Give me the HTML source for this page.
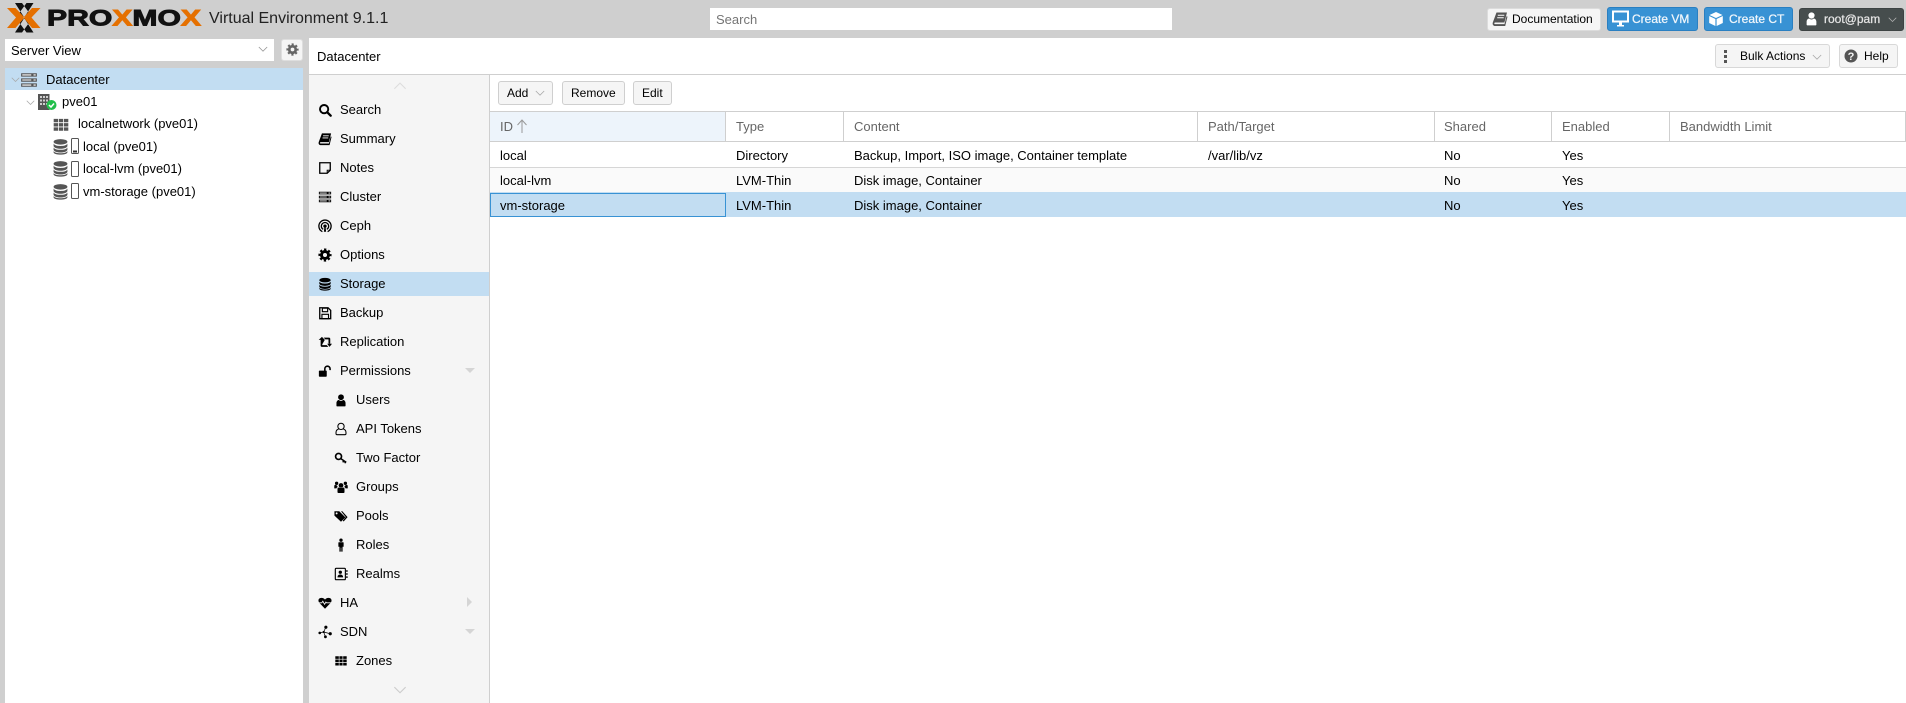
<!DOCTYPE html>
<html><head><meta charset="utf-8"><title>Proxmox VE</title>
<style>
html,body{margin:0;padding:0;width:1906px;height:703px;overflow:hidden;background:#cfcfcf}
body{position:relative;font:13px/20px "Liberation Sans",Arial,sans-serif;color:#000}
div,span.a,svg.a{position:absolute}
.t{position:absolute;white-space:nowrap;height:20px;line-height:20px;margin-top:1px}
.s{font-size:12px}
.w{font-size:12px;-webkit-text-stroke:.25px currentColor}
.b{position:absolute;box-sizing:border-box;background:#f5f5f5;border:1px solid #cfcfcf;border-radius:3px}
.h{color:#666}
svg{position:absolute;overflow:visible}
svg.m{width:14px;height:14px;margin:2px 0 0 1px}
.ln{background:#cfcfcf}
</style></head><body>
<svg width="0" height="0" style="position:absolute"><defs>
<symbol id="search" viewBox="0 0 16 16"><circle cx="7" cy="7" r="4.7" fill="none" stroke="currentColor" stroke-width="2.2"/><path d="M10.500 10.500l4 4" stroke="currentColor" stroke-width="2.600" stroke-linecap="round"/></symbol>
<symbol id="book" viewBox="0 0 16 16"><path d="M4.500 1.500H15l-2.600 10H3c-.8 0-1 1.600 0 1.600h9.500l2-8 1 .5-2.300 9.400H2.500C1 14.500.3 13.200.8 11.500z" fill="currentColor"/><path d="M5.800 4.300h6.500M5.200 6.800h6.500" stroke="#fff" stroke-width="1"/></symbol>
<symbol id="notes" viewBox="0 0 16 16"><path d="M2 2h12v8.500L10.500 14H2z" fill="none" stroke="currentColor" stroke-width="1.500"/><path d="M14 10.500h-3.500V14" fill="none" stroke="currentColor" stroke-width="1.100"/></symbol>
<symbol id="server" viewBox="0 0 16 16"><path d="M1 2h14v3H1zM1 6.500h14v3H1zM1 11h14v3H1z" fill="currentColor"/><path d="M2 3.500h8M12 3.500h2M2 8h8M12 8h2M2 12.500h8M12 12.500h2" stroke="#fff" stroke-width=".9"/></symbol>
<symbol id="ceph" viewBox="0 0 16 16"><g fill="none" stroke="currentColor" stroke-width="1.500"><path d="M5 14.500C2.500 13.300 1 10.800 1 8.200a7 7 0 0 1 14 0c0 2.600-1.500 5.100-4 6.300"/><path d="M6 11.800C4.600 11 3.800 9.700 3.800 8.200a4.200 4.200 0 0 1 8.400 0c0 1.500-.8 2.800-2.200 3.600"/></g><circle cx="8" cy="8.200" r="1.900" fill="currentColor"/><path d="M7.300 9.500h1.400l.6 5h-2.600z" fill="currentColor"/></symbol>
<symbol id="gear" viewBox="0 0 16 16"><circle cx="8" cy="8" r="4" fill="none" stroke="currentColor" stroke-width="3.400"/><circle cx="8" cy="8" r="6.300" fill="none" stroke="currentColor" stroke-width="2.400" stroke-dasharray="2.600 2.350" stroke-dashoffset="1.300"/></symbol>
<symbol id="db" viewBox="0 0 16 16"><ellipse cx="8" cy="3.600" rx="6.500" ry="2.600" fill="currentColor"/><path d="M1.500 5.300c1 1.700 3.500 2.200 6.500 2.200s5.500-.5 6.500-2.200v2.300c-.5 1.700-3.500 2.500-6.500 2.500s-6-.8-6.500-2.500zM1.500 8.900c1 1.700 3.500 2.200 6.500 2.200s5.500-.5 6.500-2.200v2.300c-.5 1.700-3.500 2.500-6.500 2.500s-6-.8-6.500-2.500z" fill="currentColor"/><path d="M1.500 12.300c1 1.500 3.500 2 6.500 2s5.500-.5 6.500-2v1.300c-.5 1.400-3.500 2-6.500 2s-6-.6-6.500-2z" fill="currentColor"/></symbol>
<symbol id="save" viewBox="0 0 16 16"><path d="M2 2h9.500L14.500 5v9.500H2z" fill="none" stroke="currentColor" stroke-width="1.500"/><path d="M5 2.500h6v4H5zM4.500 9.500h7.500v5H4.500z" fill="none" stroke="currentColor" stroke-width="1.300"/></symbol>
<symbol id="retweet" viewBox="0 0 16 16"><path d="M3.500 13V5.500H.8l3.700-3.300 3.300 3.300" fill="currentColor"/><path d="M3 5h1.800v6.500H10l1.800 2H4.500c-1 0-1.500-.5-1.500-1.500zM6.500 3h6c1 0 1.500.5 1.500 1.500V10h-2V5H8.300z" fill="currentColor"/><path d="M10.500 10h5.500l-2.800 3.500z" fill="currentColor"/></symbol>
<symbol id="unlock" viewBox="0 0 16 16"><rect x="1" y="7.500" width="9" height="7" rx=".8" fill="currentColor"/><path d="M7.800 8V5.500a3 3 0 0 1 6 0V7" fill="none" stroke="currentColor" stroke-width="1.800"/></symbol>
<symbol id="user" viewBox="0 0 16 16"><circle cx="8" cy="4.800" r="3.300" fill="currentColor"/><path d="M2.800 14.500v-3c0-2 1.300-3.500 2.800-3.500 .7.700 1.500 1 2.400 1s1.700-.3 2.400-1c1.500 0 2.800 1.500 2.800 3.500v3c0 .5-.4.800-1 .8H3.800c-.6 0-1-.3-1-.8z" fill="currentColor"/></symbol>
<symbol id="usero" viewBox="0 0 16 16"><circle cx="8" cy="5" r="3.600" fill="none" stroke="currentColor" stroke-width="1.200"/><path d="M5.400 8c-1.800.5-3.100 2-3.100 4v1.300c0 .7.500 1.200 1.200 1.200h9c.7 0 1.200-.5 1.200-1.200V12c0-2-1.300-3.500-3.100-4" fill="none" stroke="currentColor" stroke-width="1.200"/></symbol>
<symbol id="key" viewBox="0 0 16 16"><circle cx="5.200" cy="6.200" r="3.400" fill="none" stroke="currentColor" stroke-width="1.900"/><path d="M7.800 8.700l6.200 4.300M11 11l-.8 2M13 12.500l-.6 1.500" fill="none" stroke="currentColor" stroke-width="1.700"/></symbol>
<symbol id="users" viewBox="0 0 16 16"><circle cx="8" cy="6.200" r="2.700" fill="currentColor"/><circle cx="3" cy="3.800" r="1.900" fill="currentColor"/><circle cx="13" cy="3.800" r="1.900" fill="currentColor"/><path d="M4 10c0-1 .8-1.500 1.800-1.500.6.500 1.300.7 2.200.7s1.600-.2 2.200-.7c1 0 1.800.5 1.800 1.500v3.800c0 .6-.5 1-1 1H5c-.5 0-1-.4-1-1z" fill="currentColor"/><path d="M.3 6.500c.2-.8.8-1 1.400-1 .5.400 1 .6 1.700.6l.8 2c-.8.300-1.200.8-1.400 1.500H.3zM15.700 6.500c-.2-.8-.8-1-1.400-1-.5.400-1 .6-1.700.6l-.8 2c.8.300 1.200.8 1.400 1.500h2.500z" fill="currentColor"/></symbol>
<symbol id="tags" viewBox="0 0 16 16"><path d="M.5 2.500h5.500l7 7-5 5-7.500-7z" fill="currentColor"/><path d="M8 2.500h1.500l6 6.800-4.500 5-1-1 3.500-4z" fill="currentColor"/><circle cx="3" cy="5" r="1.100" fill="#f5f5f5"/></symbol>
<symbol id="male" viewBox="0 0 16 16"><circle cx="8" cy="2.500" r="1.900" fill="currentColor"/><path d="M5 5.500c0-.4.300-.7.800-.7h4.400c.5 0 .8.300.8.700V10H9.800v5.500H8.300V11h-.6v4.500H6.200V10H5z" fill="currentColor"/></symbol>
<symbol id="realm" viewBox="0 0 16 16"><rect x="1.500" y="1.500" width="11.500" height="13" rx="1" fill="none" stroke="currentColor" stroke-width="1.300"/><circle cx="7.200" cy="6" r="1.900" fill="currentColor"/><path d="M4 11.800c0-2 1.300-3.200 3.200-3.200s3.200 1.200 3.200 3.200z" fill="currentColor"/><path d="M14 3.500h1.500v2H14zM14 7h1.500v2H14zM14 10.500h1.500v2H14z" fill="currentColor"/></symbol>
<symbol id="heart" viewBox="0 0 16 16"><path d="M8 14.500L1.800 8.200C-.2 6-.1 2.500 3.800 2.200 5.800 2.100 7 3 8 4.200 9 3 10.200 2.100 12.200 2.200c3.900.3 4 3.800 2 6z" fill="currentColor"/><path d="M.5 7.800h3.800l1.200-1.800 2 3.500 1.500-2.500.8.800h6" fill="none" stroke="#f5f5f5" stroke-width="1"/></symbol>
<symbol id="sdn" viewBox="0 0 16 16"><g fill="currentColor"><circle cx="2" cy="9" r="1.500"/><circle cx="9" cy="2.500" r="1.800"/><circle cx="6.500" cy="8" r="1.300"/><circle cx="8.500" cy="13.500" r="1.600"/><circle cx="14" cy="10" r="1.800"/></g><path d="M2 9l4.500-1 2.500-5.500M6.500 8l2 5.500M6.500 8l7.500 2" stroke="currentColor" stroke-width=".8" fill="none"/></symbol>
<symbol id="th" viewBox="0 0 16 16"><path d="M1.500 2.500h4v3h-4zM6.200 2.500h3.600v3H6.200zM10.500 2.500h4v3h-4zM1.500 6.300h4v3h-4zM6.200 6.300h3.600v3H6.200zM10.500 6.300h4v3h-4zM1.500 10.100h4v3h-4zM6.200 10.100h3.600v3H6.200zM10.500 10.100h4v3h-4z" fill="currentColor"/></symbol>
<symbol id="chev" viewBox="0 0 12 8"><path d="M1 1l5 5 5-5" fill="none" stroke="currentColor" stroke-width="1"/></symbol>
</defs></svg>

<!-- top bar: logo -->
<svg style="left:0;top:0" width="210" height="38">
<path d="M15 3h7l8 11-6 3zM33.500 3h-7l-8 11 6 3z" fill="#111"/>
<path d="M15 32.500h7l8-11-6-3zM33.500 32.500h-7l-8-11 6-3z" fill="#111"/>
<path d="M7 8h8.500l9 9.500-9 10.500H7l9-10.500zM40.500 8H32l-8.500 9.500 8.500 10.500h8.500l-9-10.500z" fill="#e57000"/>
<text x="47" y="25.500" font-family="Liberation Sans" font-weight="700" font-size="22" textLength="154" lengthAdjust="spacingAndGlyphs" stroke="#111" stroke-width=".9" fill="#111">PRO<tspan fill="#e57000" stroke="#e57000">X</tspan>MO<tspan fill="#e57000" stroke="#e57000">X</tspan></text>
</svg>
<span class="t" style="left:209px;top:8px;font-size:16px;color:#222">Virtual Environment 9.1.1</span>

<div style="left:710px;top:8px;width:462px;height:22px;background:#fff"></div>
<span class="t h" style="left:716px;top:9px;color:#757575">Search</span>

<div class="b" style="left:1487px;top:8px;width:114px;height:23px;border-color:#dcdcdc"></div>
<svg style="left:1492px;top:11px;color:#555" width="16" height="16"><use href="#book"/></svg>
<span class="t s" style="left:1512px;top:8px">Documentation</span>
<div class="b" style="left:1607px;top:7px;width:91px;height:24px;background:#3892d4;border-color:#2a7fc1"></div>
<svg style="left:1612px;top:10px" width="18" height="17"><path d="M1 1.500h15v10H1z" fill="none" stroke="#fff" stroke-width="2"/><path d="M5 15h7v1.500H5zM7 12h3v3H7z" fill="#fff"/></svg>
<span class="t w" style="left:1632px;top:8px;color:#f0f6fb">Create VM</span>
<div class="b" style="left:1704px;top:7px;width:89px;height:24px;background:#3892d4;border-color:#2a7fc1"></div>
<svg style="left:1708px;top:11px" width="16" height="16"><path d="M8 1l6.500 3-6.500 3-6.500-3zM1.200 5l6.200 3v7l-6.200-3zM14.800 5l-6.200 3v7l6.200-3z" fill="#fff"/></svg>
<span class="t w" style="left:1729px;top:8px;color:#f0f6fb">Create CT</span>
<div class="b" style="left:1799px;top:8px;width:105px;height:23px;background:#464d4d;border-color:#3d4343"></div>
<svg style="left:1804px;top:11px;color:#fff" width="15" height="15" viewBox="0 0 16 16"><use href="#user"/></svg>
<span class="t w" style="left:1824px;top:8px;color:#e6e6e6">root@pam</span>
<svg style="left:1888px;top:17px;color:#b5b5b5" width="9" height="6" viewBox="0 0 12 8"><use href="#chev"/></svg>

<!-- left -->
<div style="left:5px;top:39px;width:269px;height:22px;background:#fff"></div>
<span class="t" style="left:11px;top:40px">Server View</span>
<svg style="left:258px;top:46px;color:#999" width="10" height="7" viewBox="0 0 12 8"><use href="#chev"/></svg>
<div class="b" style="left:281px;top:39px;width:22px;height:22px;border-color:#dedede"></div>
<svg style="left:286px;top:43px;color:#666" width="13" height="13" viewBox="0 0 16 16"><use href="#gear"/></svg>

<div style="left:5px;top:68px;width:298px;height:635px;background:#fff"></div>
<div style="left:5px;top:68px;width:298px;height:22px;background:#c2ddf2"></div>
<svg style="left:11px;top:77px;color:#a8a8a8" width="9" height="6" viewBox="0 0 12 8"><use href="#chev"/></svg>
<svg style="left:20px;top:71px;color:#555" width="18" height="18" viewBox="0 0 16 16"><use href="#server"/></svg>
<span class="t" style="left:46px;top:69px">Datacenter</span>
<svg style="left:26px;top:100px;color:#a8a8a8" width="9" height="6" viewBox="0 0 12 8"><use href="#chev"/></svg>
<svg style="left:37px;top:93px" width="21" height="18"><path d="M1 1h11.500v16H1z" fill="#555"/><path d="M3 3h2v2H3zM6 3h2v2H6zM9 3h2v2H9zM3 6.500h2v2H3zM6 6.500h2v2H6zM9 6.500h2v2H9zM3 10h2v2H3zM6 10h2v2H6zM9 10h2v2H9z" fill="#cfcfcf"/><circle cx="14.500" cy="12" r="5" fill="#21bf4b"/><path d="M12 12l2 2 3-3.500" fill="none" stroke="#fff" stroke-width="1.500"/></svg>
<span class="t" style="left:62px;top:91px">pve01</span>
<svg style="left:52px;top:116px;color:#555" width="18" height="16" viewBox="0 0 16 14.200"><use href="#th" width="16" height="16"/></svg>
<span class="t" style="left:78px;top:113px">localnetwork (pve01)</span>
<svg style="left:52px;top:138px;color:#555" width="17" height="17" viewBox="0 0 16 16"><use href="#db"/></svg>
<svg style="left:71px;top:138px" width="9" height="17"><rect x=".5" y=".5" width="7" height="15" rx="1" fill="#fff" stroke="#555"/><path d="M2 12.500h4v2H2z" fill="#333"/></svg>
<span class="t" style="left:83px;top:136px">local (pve01)</span>
<svg style="left:52px;top:160px;color:#555" width="17" height="17" viewBox="0 0 16 16"><use href="#db"/></svg>
<svg style="left:71px;top:161px" width="9" height="17"><rect x=".5" y=".5" width="7" height="15" rx="1" fill="#fff" stroke="#555"/></svg>
<span class="t" style="left:83px;top:158px">local-lvm (pve01)</span>
<svg style="left:52px;top:183px;color:#555" width="17" height="17" viewBox="0 0 16 16"><use href="#db"/></svg>
<svg style="left:71px;top:183px" width="9" height="17"><rect x=".5" y=".5" width="7" height="15" rx="1" fill="#fff" stroke="#555"/></svg>
<span class="t" style="left:83px;top:181px">vm-storage (pve01)</span>

<!-- main -->
<div style="left:309px;top:38px;width:1597px;height:665px;background:#fff"></div>
<div class="ln" style="left:309px;top:74px;width:1597px;height:1px"></div>
<span class="t" style="left:317px;top:46px">Datacenter</span>

<div class="b" style="left:1715px;top:44px;width:115px;height:24px;border-color:#d8d8d8"></div>
<svg style="left:1723px;top:48px" width="6" height="16"><path d="M1 2h3v3H1zM1 7h3v3H1zM1 12h3v3H1z" fill="#555"/></svg>
<span class="t s" style="left:1740px;top:45px">Bulk Actions</span>
<svg style="left:1812px;top:54px;color:#aaa" width="10" height="7" viewBox="0 0 12 8"><use href="#chev"/></svg>
<div class="b" style="left:1839px;top:44px;width:59px;height:24px;border-color:#d8d8d8"></div>
<svg style="left:1844px;top:49px" width="14" height="14"><circle cx="7" cy="7" r="6.500" fill="#555"/><text x="7" y="11" font-size="11" font-weight="700" text-anchor="middle" fill="#f5f5f5" font-family="Liberation Sans">?</text></svg>
<span class="t s" style="left:1864px;top:45px">Help</span>

<!-- side menu -->
<div style="left:309px;top:75px;width:180px;height:628px;background:#f5f5f5"></div>
<div class="ln" style="left:489px;top:75px;width:1px;height:628px"></div>
<svg style="left:392px;top:82px;color:#ddd" width="16" height="9" viewBox="0 0 12 8"><g transform="matrix(1 0 0 -1 0 7)"><use href="#chev"/></g></svg>
<div style="left:309px;top:272px;width:180px;height:24px;background:#c2ddf2"></div>

<svg class="m" style="left:317px;top:101px"><use href="#search"/></svg><span class="t" style="left:340px;top:99px">Search</span>
<svg class="m" style="left:317px;top:130px"><use href="#book"/></svg><span class="t" style="left:340px;top:128px">Summary</span>
<svg class="m" style="left:317px;top:159px"><use href="#notes"/></svg><span class="t" style="left:340px;top:157px">Notes</span>
<svg class="m" style="left:317px;top:188px"><use href="#server"/></svg><span class="t" style="left:340px;top:186px">Cluster</span>
<svg class="m" style="left:317px;top:217px"><use href="#ceph"/></svg><span class="t" style="left:340px;top:215px">Ceph</span>
<svg class="m" style="left:317px;top:246px"><use href="#gear"/></svg><span class="t" style="left:340px;top:244px">Options</span>
<svg class="m" style="left:317px;top:275px"><use href="#db"/></svg><span class="t" style="left:340px;top:273px">Storage</span>
<svg class="m" style="left:317px;top:304px"><use href="#save"/></svg><span class="t" style="left:340px;top:302px">Backup</span>
<svg class="m" style="left:317px;top:333px"><use href="#retweet"/></svg><span class="t" style="left:340px;top:331px">Replication</span>
<svg class="m" style="left:317px;top:362px"><use href="#unlock"/></svg><span class="t" style="left:340px;top:360px">Permissions</span>
<svg style="left:465px;top:368px" width="10" height="6"><path d="M0 0h10L5 5z" fill="#d5d5d5"/></svg>
<svg class="m" style="left:333px;top:391px"><use href="#user"/></svg><span class="t" style="left:356px;top:389px">Users</span>
<svg class="m" style="left:333px;top:420px"><use href="#usero"/></svg><span class="t" style="left:356px;top:418px">API Tokens</span>
<svg class="m" style="left:333px;top:449px"><use href="#key"/></svg><span class="t" style="left:356px;top:447px">Two Factor</span>
<svg class="m" style="left:333px;top:478px"><use href="#users"/></svg><span class="t" style="left:356px;top:476px">Groups</span>
<svg class="m" style="left:333px;top:507px"><use href="#tags"/></svg><span class="t" style="left:356px;top:505px">Pools</span>
<svg class="m" style="left:333px;top:536px"><use href="#male"/></svg><span class="t" style="left:356px;top:534px">Roles</span>
<svg class="m" style="left:333px;top:565px"><use href="#realm"/></svg><span class="t" style="left:356px;top:563px">Realms</span>
<svg class="m" style="left:317px;top:594px"><use href="#heart"/></svg><span class="t" style="left:340px;top:592px">HA</span>
<svg style="left:467px;top:597px" width="6" height="10"><path d="M0 0v10l5-5z" fill="#d5d5d5"/></svg>
<svg class="m" style="left:317px;top:623px"><use href="#sdn"/></svg><span class="t" style="left:340px;top:621px">SDN</span>
<svg style="left:465px;top:629px" width="10" height="6"><path d="M0 0h10L5 5z" fill="#d5d5d5"/></svg>
<svg class="m" style="left:333px;top:652px"><use href="#th"/></svg><span class="t" style="left:356px;top:650px">Zones</span>
<svg style="left:392px;top:686px;color:#ccc" width="16" height="9" viewBox="0 0 12 8"><use href="#chev"/></svg>

<!-- toolbar -->
<div class="b" style="left:498px;top:81px;width:55px;height:24px"></div><span class="t s" style="left:507px;top:82px">Add</span>
<svg style="left:535px;top:90px;color:#aaa" width="10" height="7" viewBox="0 0 12 8"><use href="#chev"/></svg>
<div class="b" style="left:562px;top:81px;width:63px;height:24px"></div><span class="t s" style="left:571px;top:82px">Remove</span>
<div class="b" style="left:633px;top:81px;width:39px;height:24px"></div><span class="t s" style="left:642px;top:82px">Edit</span>

<!-- grid header -->
<div style="left:490px;top:112px;width:235px;height:29px;background:#edf4fb"></div>
<div class="ln" style="left:490px;top:111px;width:1416px;height:1px"></div>
<div class="ln" style="left:490px;top:141px;width:1416px;height:1px"></div>
<div class="ln" style="left:725px;top:111px;width:1px;height:30px"></div>
<div class="ln" style="left:843px;top:111px;width:1px;height:30px"></div>
<div class="ln" style="left:1197px;top:111px;width:1px;height:30px"></div>
<div class="ln" style="left:1551px;top:111px;width:1px;height:30px;"></div>
<div class="ln" style="left:1434px;top:111px;width:1px;height:30px"></div>
<div class="ln" style="left:1669px;top:111px;width:1px;height:30px"></div>
<div class="ln" style="left:1905px;top:111px;width:1px;height:30px"></div>
<span class="t h" style="left:500px;top:116px">ID</span>
<svg style="left:516px;top:119px" width="12" height="15"><path d="M6 14V1M1.500 6L6 1l4.500 5" fill="none" stroke="#999" stroke-width="1"/></svg>
<span class="t h" style="left:736px;top:116px">Type</span>
<span class="t h" style="left:854px;top:116px">Content</span>
<span class="t h" style="left:1208px;top:116px">Path/Target</span>
<span class="t h" style="left:1444px;top:116px">Shared</span>
<span class="t h" style="left:1562px;top:116px">Enabled</span>
<span class="t h" style="left:1680px;top:116px">Bandwidth Limit</span>

<!-- rows -->
<div style="left:490px;top:168px;width:1416px;height:24px;background:#fafafa"></div>
<div class="ln" style="left:490px;top:167px;width:1416px;height:1px;background:#d6d6d6"></div>
<div style="left:490px;top:192px;width:1416px;height:25px;background:#c2ddf2"></div>
<div style="left:490px;top:193px;width:236px;height:24px;box-sizing:border-box;border:1px solid #3892d4"></div>

<span class="t" style="left:500px;top:145px">local</span>
<span class="t" style="left:736px;top:145px">Directory</span>
<span class="t" style="left:854px;top:145px">Backup, Import, ISO image, Container template</span>
<span class="t" style="left:1208px;top:145px">/var/lib/vz</span>
<span class="t" style="left:1444px;top:145px">No</span>
<span class="t" style="left:1562px;top:145px">Yes</span>

<span class="t" style="left:500px;top:170px">local-lvm</span>
<span class="t" style="left:736px;top:170px">LVM-Thin</span>
<span class="t" style="left:854px;top:170px">Disk image, Container</span>
<span class="t" style="left:1444px;top:170px">No</span>
<span class="t" style="left:1562px;top:170px">Yes</span>

<span class="t" style="left:500px;top:195px">vm-storage</span>
<span class="t" style="left:736px;top:195px">LVM-Thin</span>
<span class="t" style="left:854px;top:195px">Disk image, Container</span>
<span class="t" style="left:1444px;top:195px">No</span>
<span class="t" style="left:1562px;top:195px">Yes</span>
</body></html>
